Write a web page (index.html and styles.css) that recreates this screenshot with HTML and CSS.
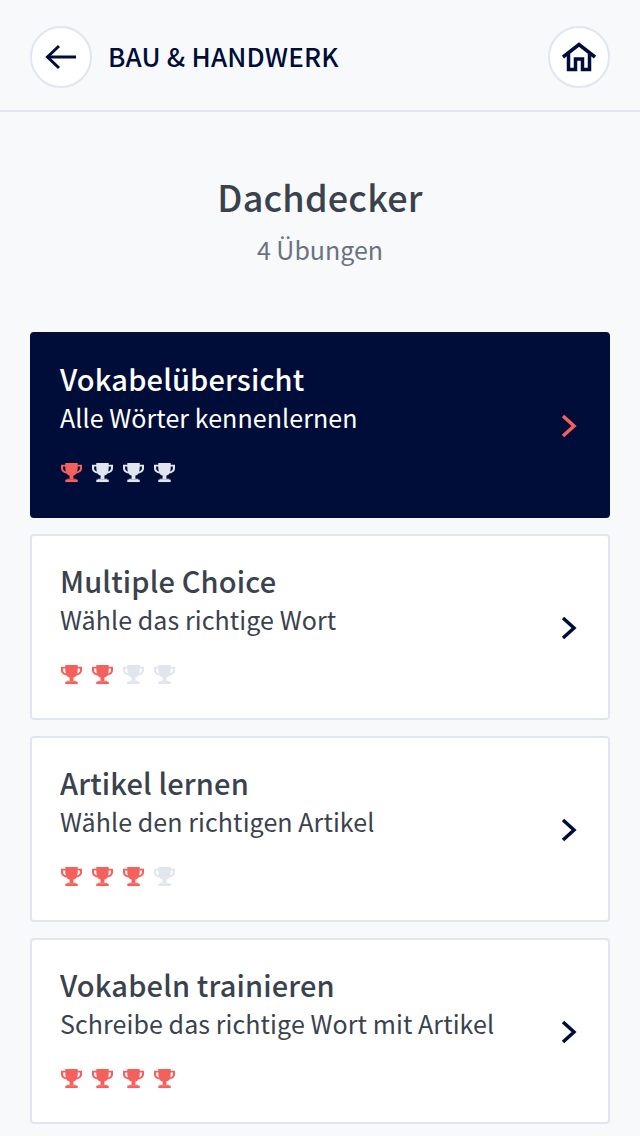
FILE: index.html
```html
<!DOCTYPE html>
<html lang="de">
<head>
    <meta charset="UTF-8">
    <meta name="viewport" content="width=device-width, initial-scale=1.0">
    <title>Dachdecker</title>
    <link rel="stylesheet" href="styles.css">
</head>
<body>
    <svg class="defs" width="0" height="0" aria-hidden="true">
        <symbol id="trophy" viewBox="0 0 22 22">
            <path d="M4.500 1h13v2H22v3.500c0 3-2.400 5-5.500 5.300-.8 1.300-2 2.100-3.500 2.400V17.500h3v1H6v-1h3v-3.300c-1.500-.3-2.700-1.100-3.500-2.400C2.400 11.500 0 9.500 0 6.500V3h4.500V1zM2.200 4.800v1.700c0 1.700 1.100 3 3 3.400-.4-1-.7-2-.7-3.100v-2H2.200zm17.600 0h-2.300v2c0 1.100-.3 2.100-.7 3.100 1.900-.4 3-1.700 3-3.400V4.800z" fill-rule="evenodd"/>
            <rect x="4.500" y="18.500" width="13" height="2.500"/>
        </symbol>
    </svg>

    <header class="topbar">
        <div class="topbar-left">
            <a class="round-btn" href="#">
                <svg width="34" height="28" viewBox="0 0 34 28" fill="none" stroke="#000d38" stroke-width="3">
                    <path d="M32 14H3"/>
                    <path d="M15 3L3.500 14 15 25"/>
                </svg>
            </a>
            <span class="topbar-title">BAU &amp; HANDWERK</span>
        </div>
        <a class="round-btn" href="#">
            <svg width="34" height="30" viewBox="0 0 34 30" fill="none" stroke="#000d38" stroke-width="3.500">
                <path d="M1 15L17 2.500 33 15"/>
                <path d="M6.500 12v15.500h7V17h7v10.500h7V12"/>
            </svg>
        </a>
    </header>

    <main class="content">
        <div class="page-head">
            <h1>Dachdecker</h1>
            <p>4 Übungen</p>
        </div>

        <a class="card card-active" href="#">
            <div class="card-text">
                <h2>Vokabelübersicht</h2>
                <p>Alle Wörter kennenlernen</p>
                <div class="trophies">
                    <svg class="won"><use href="#trophy"/></svg>
                    <svg class="open"><use href="#trophy"/></svg>
                    <svg class="open"><use href="#trophy"/></svg>
                    <svg class="open"><use href="#trophy"/></svg>
                </div>
            </div>
            <svg class="chevron" width="18" height="24" viewBox="0 0 18 24" fill="none" stroke-width="3.500"><path d="M3 2l11 10L3 22"/></svg>
        </a>

        <a class="card" href="#">
            <div class="card-text">
                <h2>Multiple Choice</h2>
                <p>Wähle das richtige Wort</p>
                <div class="trophies">
                    <svg class="won"><use href="#trophy"/></svg>
                    <svg class="won"><use href="#trophy"/></svg>
                    <svg class="open"><use href="#trophy"/></svg>
                    <svg class="open"><use href="#trophy"/></svg>
                </div>
            </div>
            <svg class="chevron" width="18" height="24" viewBox="0 0 18 24" fill="none" stroke-width="3.500"><path d="M3 2l11 10L3 22"/></svg>
        </a>

        <a class="card" href="#">
            <div class="card-text">
                <h2>Artikel lernen</h2>
                <p>Wähle den richtigen Artikel</p>
                <div class="trophies">
                    <svg class="won"><use href="#trophy"/></svg>
                    <svg class="won"><use href="#trophy"/></svg>
                    <svg class="won"><use href="#trophy"/></svg>
                    <svg class="open"><use href="#trophy"/></svg>
                </div>
            </div>
            <svg class="chevron" width="18" height="24" viewBox="0 0 18 24" fill="none" stroke-width="3.500"><path d="M3 2l11 10L3 22"/></svg>
        </a>

        <a class="card" href="#">
            <div class="card-text">
                <h2>Vokabeln trainieren</h2>
                <p>Schreibe das richtige Wort mit Artikel</p>
                <div class="trophies">
                    <svg class="won"><use href="#trophy"/></svg>
                    <svg class="won"><use href="#trophy"/></svg>
                    <svg class="won"><use href="#trophy"/></svg>
                    <svg class="won"><use href="#trophy"/></svg>
                </div>
            </div>
            <svg class="chevron" width="18" height="24" viewBox="0 0 18 24" fill="none" stroke-width="3.500"><path d="M3 2l11 10L3 22"/></svg>
        </a>
    </main>
</body>
</html>
```

FILE: styles.css
```css
* {
    box-sizing: border-box;
    margin: 0;
    padding: 0;
}

body {
    background-color: #f8f9fb;
    font-family: "Noto Sans CJK SC", "Noto Sans", sans-serif;
    color: #3a424e;
}

a {
    text-decoration: none;
    color: inherit;
}

.defs {
    position: absolute;
}

.topbar {
    display: flex;
    align-items: center;
    justify-content: space-between;
    height: 112px;
    padding: 4px 30px 0;
    border-bottom: 2px solid #e1e5ee;
}

.topbar-left {
    display: flex;
    align-items: center;
    gap: 16px;
}

.topbar-title {
    margin-bottom: 4px;
    font-size: 26px;
    font-weight: 500;
    letter-spacing: 0.2px;
    color: #000d38;
}

.round-btn {
    display: flex;
    align-items: center;
    justify-content: center;
    width: 62px;
    height: 62px;
    background: white;
    border: 2px solid #e1e5ee;
    border-radius: 50%;
}

.content {
    display: flex;
    flex-direction: column;
    gap: 16px;
    padding: 0 30px;
}

.page-head {
    height: 204px;
    padding-top: 59px;
    text-align: center;
}

.page-head h1 {
    font-size: 36px;
    line-height: 50px;
    font-weight: 500;
    letter-spacing: 0.2px;
}

.page-head p {
    margin-top: 11px;
    font-size: 25px;
    line-height: 34px;
    color: #6b7280;
}

.card {
    display: flex;
    align-items: center;
    justify-content: space-between;
    height: 186px;
    padding: 0 28px;
    background: white;
    border: 2px solid #e1e5ee;
    border-radius: 4px;
}

.card-active {
    background: #000d38;
    border-color: #000d38;
    color: white;
}

.card-text {
    padding-bottom: 7px;
}

.card h2 {
    margin-top: -1px;
    font-size: 29px;
    line-height: 36px;
    font-weight: 500;
    letter-spacing: 0.15px;
}

.card p {
    margin-top: 3px;
    font-size: 25px;
    line-height: 36px;
    letter-spacing: 0.08px;
}

.trophies {
    display: flex;
    gap: 10px;
    margin-top: 27px;
    margin-left: 1px;
}

.trophies svg {
    width: 21px;
    height: 21px;
}

.won {
    fill: #f4605c;
}

.open {
    fill: #e1e5ee;
}

.chevron {
    margin-top: 2px;
    margin-right: 2px;
    stroke: #000d38;
}

.card-active .chevron {
    stroke: #f4605c;
}
```
